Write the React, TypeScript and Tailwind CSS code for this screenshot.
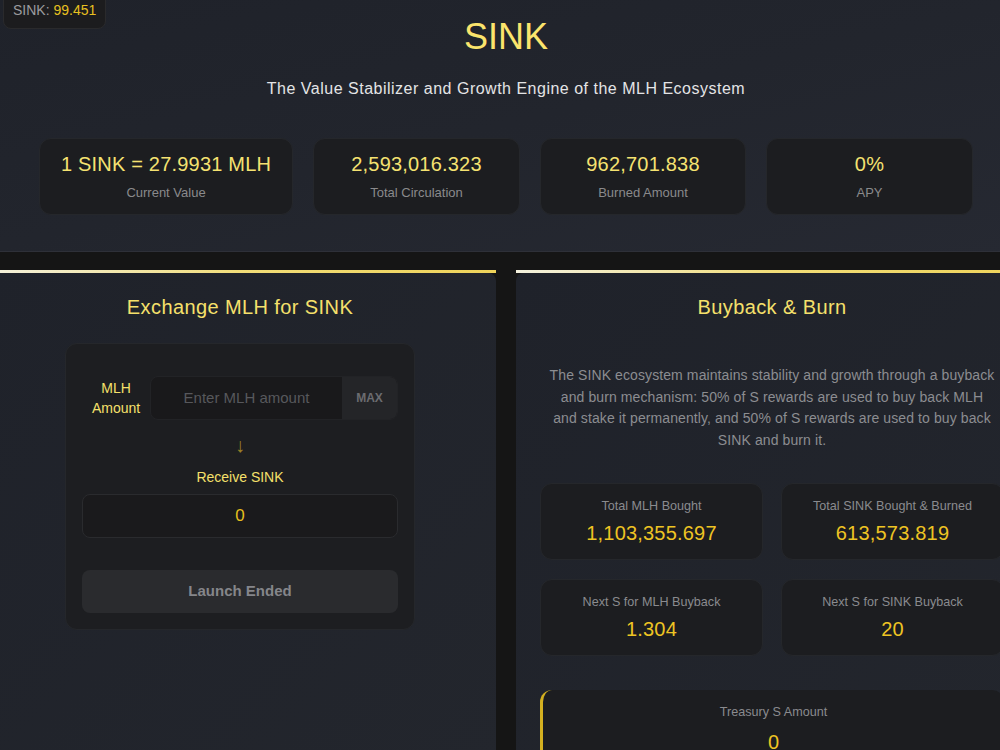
import React from "react";

const topStats = [
  { value: "1 SINK = 27.9931 MLH", label: "Current Value" },
  { value: "2,593,016.323", label: "Total Circulation" },
  { value: "962,701.838", label: "Burned Amount" },
  { value: "0%", label: "APY" },
];

const burnStats = [
  { label: "Total MLH Bought", value: "1,103,355.697" },
  { label: "Total SINK Bought & Burned", value: "613,573.819" },
  { label: "Next S for MLH Buyback", value: "1.304" },
  { label: "Next S for SINK Buyback", value: "20" },
];

const StatCard = ({ value, label }: { value: string; label: string }) => (
  <div className="flex flex-col items-center justify-center h-[77px] rounded-xl bg-[#1c1d20] border border-[#25272b]">
    <span className="text-xl leading-7 text-[#f5e271] font-medium tracking-[0.2px]">{value}</span>
    <span className="text-[13px] leading-5 text-[#8a8a8c] mt-[5px]">{label}</span>
  </div>
);

const PanelTop = () => (
  <div className="h-[3px] bg-gradient-to-r from-[#f4f1de] via-[#f2dd78] to-[#eed35a]" />
);

const ExchangePanel = () => (
  <div className="w-[512px] shrink-0 flex flex-col">
    <PanelTop />
    <div className="flex-1 rounded-b-lg rounded-tr-lg bg-gradient-to-br from-[#1f222a] to-[#23262d] pt-5 flex flex-col items-center">
      <h2 className="text-xl leading-7 font-medium tracking-[0.4px] text-[#f5e06b]">Exchange MLH for SINK</h2>
      <div className="mt-[22px] w-[350px] rounded-xl bg-[#1d1e21] border border-[#25272b] pt-8 px-4 pb-4 flex flex-col">
        <div className="flex items-center">
          <span className="w-[68px] text-center text-sm leading-[20px] text-[#f5e06b]">
            MLH
            <br />
            Amount
          </span>
          <div className="flex-1 flex h-11 rounded-lg bg-[#19191b] border border-[#222326] overflow-hidden">
            <input
              placeholder="Enter MLH amount"
              className="flex-1 min-w-0 bg-transparent text-center text-[15px] text-[#ddd] placeholder:text-[#57585c] outline-none"
            />
            <button className="w-[55px] bg-[#242528] text-xs font-bold text-[#6b6c70]">MAX</button>
          </div>
        </div>
        <span className="mt-[11px] text-center text-xl leading-7 text-[#9c8126]">↓</span>
        <span className="mt-2 text-center text-sm leading-5 font-medium text-[#f5e06b]">Receive SINK</span>
        <div className="mt-[7px] h-11 rounded-lg bg-[#1a1a1c] border border-[#2a2b2e] flex items-center justify-center text-[17px] text-[#e6bf1e]">
          0
        </div>
        <button className="mt-8 h-[43px] rounded-lg bg-[#2a2b2e] text-[15px] font-bold text-[#85868a]">
          Launch Ended
        </button>
      </div>
    </div>
  </div>
);

const BurnPanel = () => (
  <div className="w-[512px] shrink-0 flex flex-col">
    <PanelTop />
    <div className="flex-1 rounded-b-lg rounded-tl-lg bg-gradient-to-br from-[#1f222a] to-[#23262d] pt-5 px-6 flex flex-col">
      <h2 className="text-center text-xl leading-7 font-medium tracking-[0.4px] text-[#f5e06b]">Buyback &amp; Burn</h2>
      <p className="mt-[44px] px-2 text-center text-sm leading-[21.7px] tracking-[0.1px] text-[#8c8d91]">
        The SINK ecosystem maintains stability and growth through a buyback and burn mechanism: 50% of S rewards are
        used to buy back MLH and stake it permanently, and 50% of S rewards are used to buy back SINK and burn it.
      </p>
      <div className="mt-[31px] grid grid-cols-2 gap-x-[18px] gap-y-[19px]">
        {burnStats.map((s) => (
          <div
            key={s.label}
            className="h-[77px] rounded-xl bg-[#1c1d20] border border-[#25272b] flex flex-col items-center justify-center"
          >
            <span className="text-[12.6px] leading-5 text-[#8a8b8f]">{s.label}</span>
            <span className="mt-[3px] text-xl leading-7 font-medium tracking-[0.2px] text-[#eec423]">{s.value}</span>
          </div>
        ))}
      </div>
      <div className="mt-[34px] h-[90px] rounded-xl bg-[#1c1d20] border-l-[3px] border-[#d4b020] flex flex-col items-center pt-[12px]">
        <span className="text-[12.6px] leading-5 text-[#8a8b8f]">Treasury S Amount</span>
        <span className="mt-[6px] text-xl leading-7 font-medium text-[#eec423]">0</span>
      </div>
    </div>
  </div>
);

export default function App() {
  return (
    <div
      className="relative w-[1000px] h-[750px] overflow-hidden bg-[#151515]"
      style={{ fontFamily: '"Liberation Sans", Arial, sans-serif' }}
    >
      <div className="w-[1044px] -ml-4 flex flex-col h-full">
        <header className="h-[252px] shrink-0 bg-gradient-to-br from-[#1f222a] via-[#22252d] to-[#262932] border-b border-[#2e3038] flex flex-col items-center pt-[17px]">
          <h1 className="text-4xl leading-10 font-medium text-[#fbe46c]">SINK</h1>
          <p className="mt-5 text-base leading-6 tracking-[0.5px] text-[#e4e4e6]">
            The Value Stabilizer and Growth Engine of the MLH Ecosystem
          </p>
          <div className="mt-[37px] grid grid-cols-[254px_207px_206px_207px] gap-5">
            {topStats.map((s) => (
              <StatCard key={s.label} value={s.value} label={s.label} />
            ))}
          </div>
        </header>
        <div className="flex gap-5 pt-[18px] flex-1">
          <ExchangePanel />
          <BurnPanel />
        </div>
      </div>
      <div className="absolute left-[3px] top-[-9px] px-[9px] py-2 rounded-lg bg-[#1c1c1e] border border-[#2a2a2c] text-sm leading-5">
        <span className="text-[#9b9b9e]">SINK: </span>
        <span className="text-[#e8c020] font-medium">99.451</span>
      </div>
    </div>
  );
}
